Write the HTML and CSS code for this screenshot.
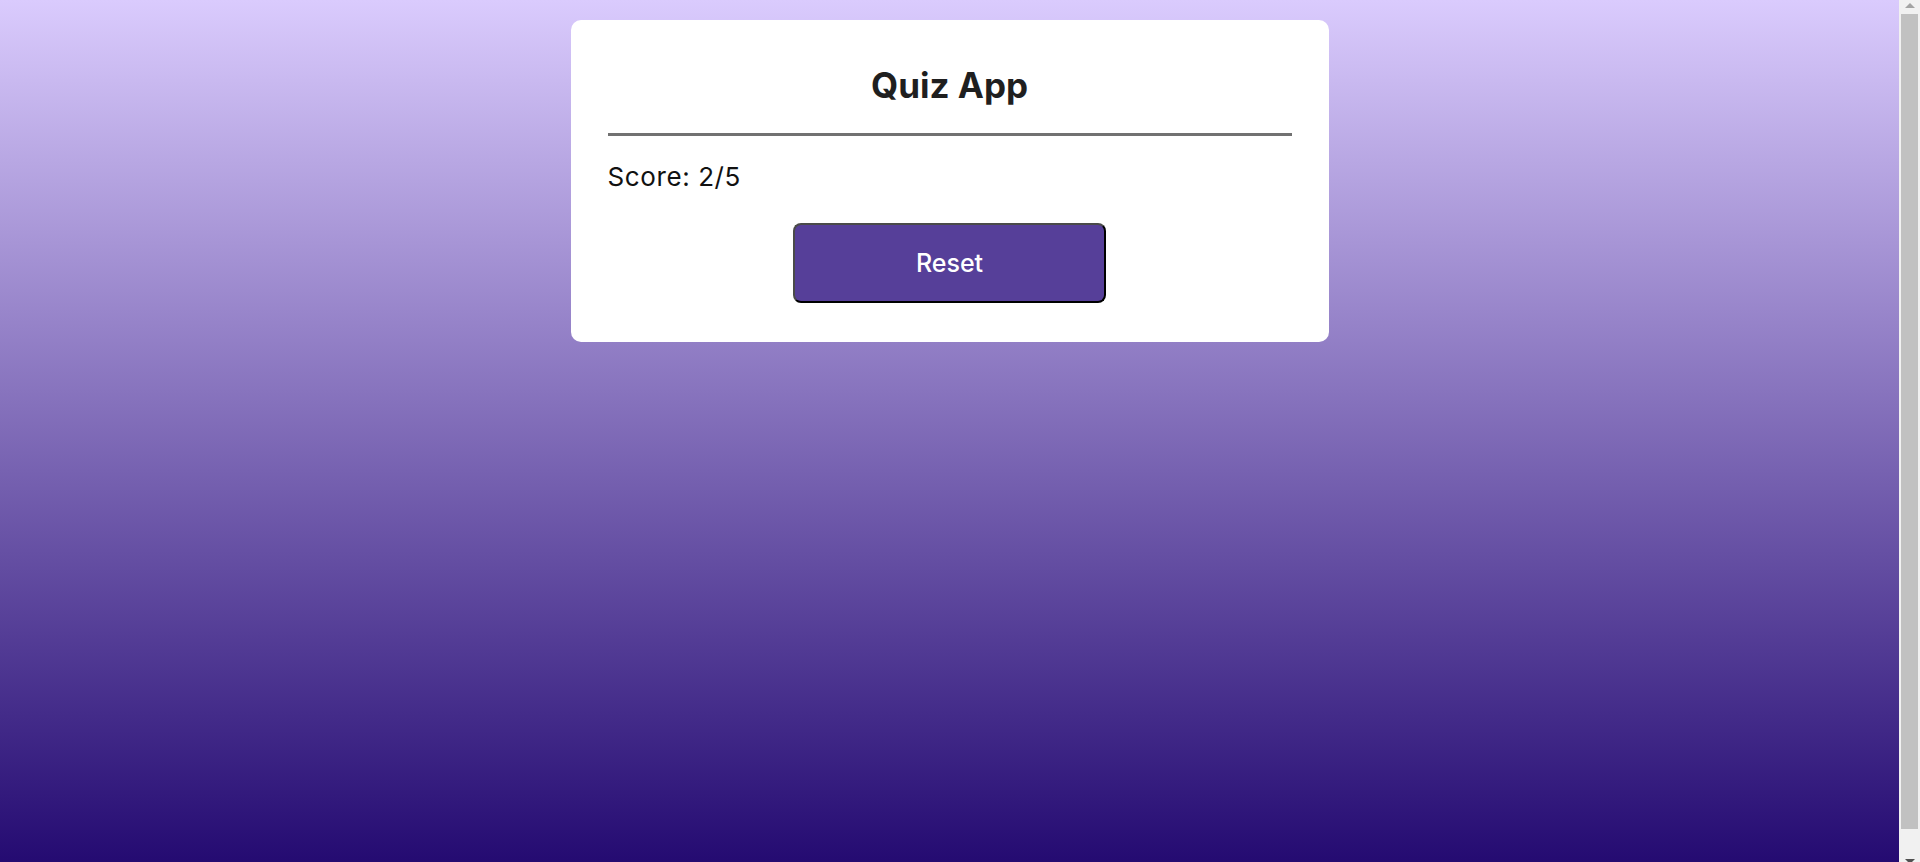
FILE: index.html
```html
<!DOCTYPE html>
<html lang="en">
<head>
<meta charset="utf-8">
<title>Quiz App</title>
<link rel="stylesheet" href="styles.css">
</head>
<body>
  <main class="quiz-card">
    <h1 class="quiz-title">Quiz App</h1>
    <hr class="quiz-divider">
    <p class="quiz-score">Score: 2/5</p>
    <button class="quiz-reset" type="button">Reset</button>
  </main>
  <div class="fake-scrollbar" aria-hidden="true">
    <span class="sb-arrow sb-up"></span>
    <span class="sb-thumb"></span>
    <span class="sb-arrow sb-down"></span>
  </div>
</body>
</html>
```

FILE: styles.css
```css
html {
  background: linear-gradient(to bottom, #dacbfd 0%, #21076f 100%);
}

body {
  margin: 8px 29px 8px 8px;
  min-height: 100vh;
  font-family: Inter, "Open Sans", "Liberation Sans", sans-serif;
}

.quiz-card {
  box-sizing: border-box;
  width: 758px;
  margin: 12px auto 0;
  padding: 43px 37px 39px;
  background: #ffffff;
  border-radius: 10px;
  display: flex;
  flex-direction: column;
}

.quiz-title {
  margin: 0;
  font-size: 35px;
  line-height: 44px;
  font-weight: 700;
  color: #1f1f1f;
  text-align: center;
}

.quiz-divider {
  margin: 26px 0 0;
  border: none;
  height: 3px;
  background: #717171;
}

.quiz-score {
  margin: 25px 0 0;
  font-size: 26px;
  line-height: 32px;
  color: #111111;
  letter-spacing: 0.6px;
}

.quiz-reset {
  align-self: center;
  box-sizing: border-box;
  width: 313px;
  height: 80px;
  margin-top: 30px;
  background: #563f99;
  color: #ffffff;
  font-family: Inter, "Open Sans", "Liberation Sans", sans-serif;
  font-size: 25px;
  font-weight: 500;
  border-width: 2px;
  border-style: solid;
  border-color: #4a4a4a #000000 #000000 #4a4a4a;
  border-radius: 8px;
  cursor: pointer;
}

/* browser-style scrollbar drawn over the page edge */
.fake-scrollbar {
  position: fixed;
  top: 0;
  right: 0;
  bottom: 0;
  width: 21px;
  background: #f1f1f1;
  display: flex;
  flex-direction: column;
  align-items: center;
}

.sb-arrow {
  width: 0;
  height: 0;
  border-left: 5px solid transparent;
  border-right: 5px solid transparent;
}

.sb-up {
  margin-top: 3px;
  border-bottom: 5px solid #a3a3a3;
}

.sb-thumb {
  margin-top: 6px;
  width: 17px;
  flex: 1;
  background: #c1c1c1;
}

.sb-down {
  margin-top: 30px;
  margin-bottom: -2px;
  border-top: 5px solid #505050;
}
```
